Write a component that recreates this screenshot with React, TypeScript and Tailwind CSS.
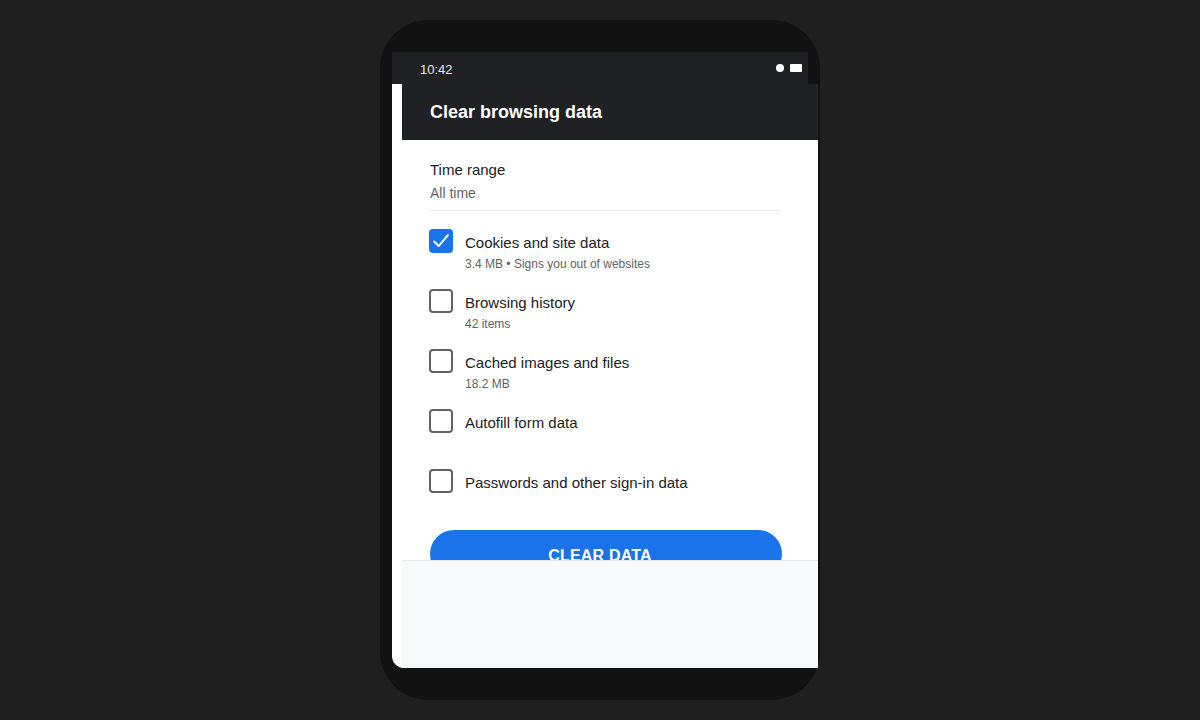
import React from "react";

const rows = [
  { label: "Cookies and site data", sub: "3.4 MB • Signs you out of websites", checked: true },
  { label: "Browsing history", sub: "42 items", checked: false },
  { label: "Cached images and files", sub: "18.2 MB", checked: false },
  { label: "Autofill form data", sub: "", checked: false },
  { label: "Passwords and other sign-in data", sub: "", checked: false },
];

function Checkbox({ checked }: { checked: boolean }) {
  if (checked) {
    return (
      <span className="flex h-[24px] w-[24px] shrink-0 items-center justify-center rounded-[4px] bg-[#1a73e8]">
        <svg viewBox="0 0 24 24" className="h-[22px] w-[22px]" fill="none" stroke="white" strokeWidth="2.1" strokeLinecap="round" strokeLinejoin="round">
          <path d="M4.5 12.5l5 5L19.5 5.5" />
        </svg>
      </span>
    );
  }
  return <span className="block h-[24px] w-[24px] shrink-0 rounded-[4px] border-2 border-[#5f6368] bg-white" />;
}

export default function App() {
  return (
    <div className="flex h-[720px] w-full items-start justify-center bg-[#1f1f1f] pt-[20px] font-['Liberation_Sans',Arial,sans-serif]">
      {/* device frame */}
      <div className="h-[680px] w-[440px] rounded-[48px] bg-[#121212] px-[12px] pt-[32px]">
        <div className="relative h-[616px] w-[416px] rounded-b-[12px] bg-white">
          {/* status bar */}
          <div className="flex h-[32px] items-center justify-between bg-[#202124] pl-[28px] pr-[6px] text-[13px] text-[#e8eaed]">
            <span className="pt-[3px]">10:42</span>
            <div className="flex items-center gap-[6px]">
              <span className="block h-[8px] w-[8px] rounded-full bg-white" />
              <span className="block h-[8px] w-[12px] rounded-[1px] bg-white" />
            </div>
          </div>

          {/* app content, nudged right */}
          <div className="relative h-[584px] w-[416px] translate-x-[10px] bg-white">
            <header className="flex h-[56px] items-center bg-[#202124] px-[28px]">
              <h1 className="text-[18px] font-bold text-white">Clear browsing data</h1>
            </header>

            <div className="pl-[28px] pr-[36px] pt-[20px]">
              <div className="text-[15px] leading-[20px] text-[#202124]">Time range</div>
              <div className="mt-[3px] text-[14px] leading-[20px] text-[#5f6368]">All time</div>
              <div className="mr-[2px] mt-[7px] h-px bg-[#e8eaed]" />

              <ul className="mt-[18px]">
                {rows.map((r) => (
                  <li key={r.label} className="-ml-px flex h-[60px] items-start gap-[12px]">
                    <Checkbox checked={r.checked} />
                    <div>
                      <div className="mt-[4px] text-[15px] leading-[20px] text-[#202124]">{r.label}</div>
                      {r.sub && <div className="mt-[3px] text-[12px] leading-[16px] text-[#5f6368]">{r.sub}</div>}
                    </div>
                  </li>
                ))}
              </ul>

              <button className="mt-[1px] flex h-[48px] w-[352px] items-center justify-center rounded-full bg-[#1a73e8] pr-[12px] pt-[4px] text-[16px] font-bold tracking-[0.2px] text-white">
                CLEAR DATA
              </button>
            </div>

            {/* bottom sheet */}
            <div className="absolute bottom-0 left-0 h-[108px] w-full border-t border-[#e8eaed] bg-[#f8f9fa]" />
          </div>
        </div>
      </div>
    </div>
  );
}
